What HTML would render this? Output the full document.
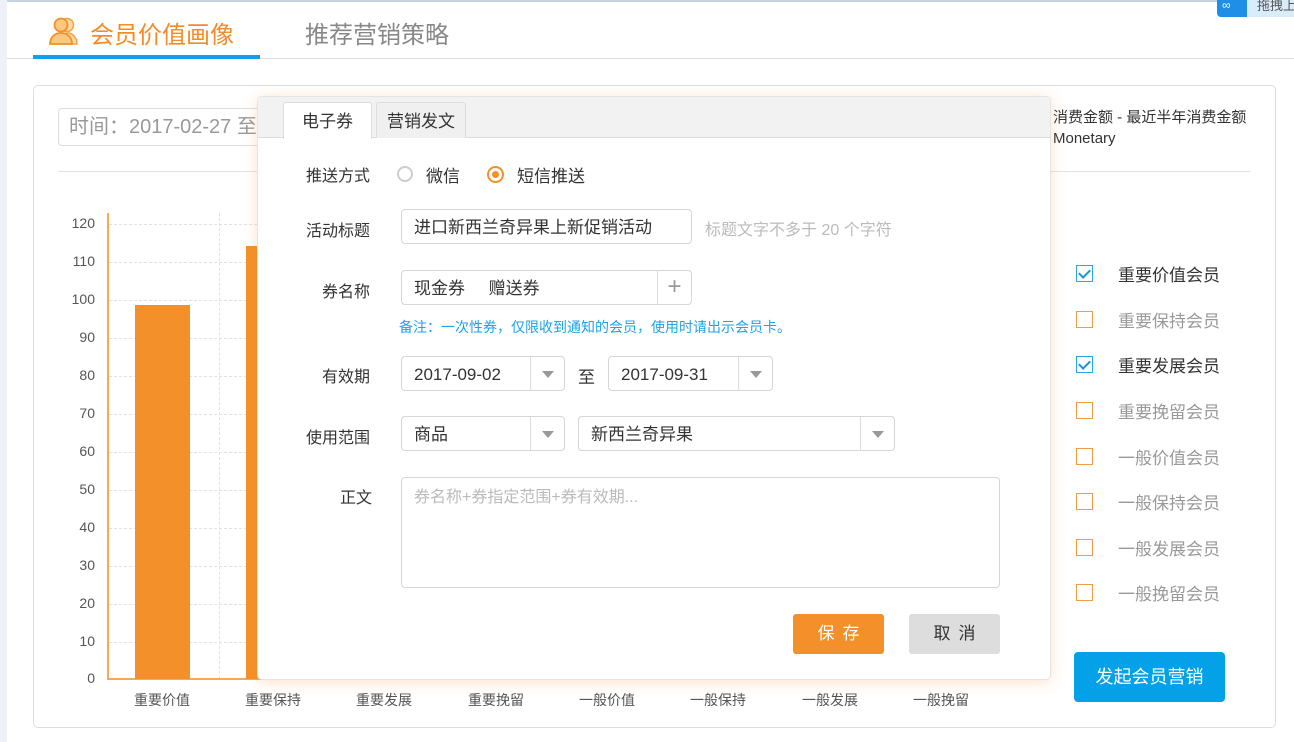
<!DOCTYPE html>
<html><head><meta charset="utf-8"><style>
*{margin:0;padding:0;box-sizing:border-box}
body{width:1294px;height:742px;background:#fff;font-family:"Liberation Sans","Noto Sans CJK SC",sans-serif;position:relative;overflow:hidden;color:#333}
.a{position:absolute}
.lbl{font-size:16px;color:#333}
.inp{position:absolute;border:1px solid #d6d6d6;border-radius:4px;background:#fff;font-size:17px;color:#333;height:35px;line-height:35px;padding-left:12px}
.dd{position:absolute;right:0;top:0;width:34px;height:33px;border-left:1px solid #ddd}
.dd:after{content:"";position:absolute;left:11px;top:14px;border-left:6px solid transparent;border-right:6px solid transparent;border-top:7px solid #999}
.yl{position:absolute;left:50px;width:45px;text-align:right;font-size:14px;color:#555}
.hg{position:absolute;left:109px;width:908px;border-top:1px dashed #e2e2e2}
.vg{position:absolute;top:213px;height:466px;border-left:1px dashed #e2e2e2}
.xl{position:absolute;top:690px;width:100px;text-align:center;font-size:14px;color:#555}
.cb{position:absolute;left:1076px;width:17px;height:17px;border:1px solid #f39b45;background:#fff}
.cb.on{border-color:#29a8e6}
.cb.on:after{content:"";position:absolute;left:4px;top:1px;width:5px;height:9px;border-right:2px solid #1896d8;border-bottom:2px solid #1896d8;transform:rotate(45deg)}
.cl{position:absolute;left:1118px;font-size:17px;color:#999}
.cl.on{color:#333}
</style></head><body>
<div class="a" style="left:0;top:0;width:1294px;height:2px;background:#c9d3e0"></div>
<div class="a" style="left:0;top:0;width:7px;height:742px;background:#eef2f8"></div>
<div class="a" style="left:1217px;top:0;width:77px;height:17px;background:#d9ecfa;border-left:30px solid #1f8ee6;border-radius:0 0 0 4px;font-size:13px;color:#555;padding-left:10px;line-height:12px;white-space:nowrap;overflow:hidden">拖拽上</div>
<div class="a" style="left:1222px;top:0;width:20px;height:12px;color:#fff;font-size:12px;line-height:10px">∞</div>
<svg class="a" style="left:48px;top:16px" width="34" height="30" viewBox="0 0 34 30"><circle cx="19" cy="9" r="6.5" fill="#fcd9a4" stroke="#f6a13c" stroke-width="1.5"/><path d="M12 28c0-7 4-11 8-11s9 4 9 11z" fill="#fcd9a4" stroke="#f6a13c" stroke-width="1.5"/><circle cx="13" cy="9" r="6.5" fill="#fcc77e" stroke="#f39029" stroke-width="1.8"/><path d="M2 28c0-7 5-11 11-11s11 4 11 11z" fill="#fcc77e" stroke="#f39029" stroke-width="1.8"/></svg>
<div class="a" style="left:90px;top:15px;font-size:24px;color:#f28c28">会员价值画像</div>
<div class="a" style="left:305px;top:15px;font-size:24px;color:#888">推荐营销策略</div>
<div class="a" style="left:7px;top:58px;width:1287px;height:1px;background:#ddd"></div>
<div class="a" style="left:33px;top:55px;width:227px;height:4px;background:#10a0e8"></div>
<div class="a" style="left:33px;top:85px;width:1243px;height:643px;border:1px solid #ddd;border-radius:5px"></div>
<div class="a" style="left:58px;top:108px;width:210px;height:38px;border:1px solid #ddd;border-radius:4px;font-size:20px;color:#999;line-height:36px;padding-left:10px;white-space:nowrap;overflow:hidden">时间：2017-02-27 至</div>
<div class="a" style="left:58px;top:171px;width:1193px;height:1px;background:#e3e3e3"></div>
<div class="a" style="left:1053px;top:107px;font-size:15px;color:#333;line-height:21px">消费金额 - 最近半年消费金额<br>Monetary</div>
<div class="yl" style="top:215px">120</div><div class="yl" style="top:253px">110</div><div class="yl" style="top:291px">100</div><div class="yl" style="top:329px">90</div><div class="yl" style="top:367px">80</div><div class="yl" style="top:405px">70</div><div class="yl" style="top:443px">60</div><div class="yl" style="top:481px">50</div><div class="yl" style="top:519px">40</div><div class="yl" style="top:557px">30</div><div class="yl" style="top:595px">20</div><div class="yl" style="top:633px">10</div><div class="yl" style="top:670px">0</div>
<div class="hg" style="top:224px"></div><div class="hg" style="top:262px"></div><div class="hg" style="top:300px"></div><div class="hg" style="top:338px"></div><div class="hg" style="top:376px"></div><div class="hg" style="top:414px"></div><div class="hg" style="top:452px"></div><div class="hg" style="top:490px"></div><div class="hg" style="top:528px"></div><div class="hg" style="top:566px"></div><div class="hg" style="top:604px"></div><div class="hg" style="top:642px"></div>
<div class="vg" style="left:219px"></div>
<div class="a" style="left:107px;top:213px;width:2px;height:467px;background:#f7a955"></div>
<div class="a" style="left:107px;top:678px;width:910px;height:2px;background:#f7a955"></div>
<div class="a" style="left:135px;top:305px;width:55px;height:374px;background:#f39029"></div>
<div class="a" style="left:246px;top:246px;width:20px;height:433px;background:#f39029"></div>
<div class="xl" style="left:112px">重要价值</div><div class="xl" style="left:223px">重要保持</div><div class="xl" style="left:334px">重要发展</div><div class="xl" style="left:446px">重要挽留</div><div class="xl" style="left:557px">一般价值</div><div class="xl" style="left:668px">一般保持</div><div class="xl" style="left:780px">一般发展</div><div class="xl" style="left:891px">一般挽留</div>
<div class="cb on" style="top:265px"></div><div class="cl on" style="top:261px">重要价值会员</div>
<div class="cb" style="top:311px"></div><div class="cl" style="top:307px">重要保持会员</div>
<div class="cb on" style="top:356px"></div><div class="cl on" style="top:352px">重要发展会员</div>
<div class="cb" style="top:402px"></div><div class="cl" style="top:398px">重要挽留会员</div>
<div class="cb" style="top:448px"></div><div class="cl" style="top:444px">一般价值会员</div>
<div class="cb" style="top:493px"></div><div class="cl" style="top:489px">一般保持会员</div>
<div class="cb" style="top:539px"></div><div class="cl" style="top:535px">一般发展会员</div>
<div class="cb" style="top:584px"></div><div class="cl" style="top:580px">一般挽留会员</div>
<div class="a" style="left:1074px;top:652px;width:151px;height:50px;background:#04a0e8;border-radius:4px;color:#fff;font-size:18px;text-align:center;line-height:50px">发起会员营销</div>
<div class="a" style="left:257px;top:96px;width:794px;height:584px;background:#fff;border:1px solid #e4e4e4;border-radius:5px;box-shadow:0 2px 14px rgba(245,150,60,.28)"></div>
<div class="a" style="left:258px;top:97px;width:792px;height:41px;background:#f2f2f2;border-bottom:1px solid #ddd;border-radius:5px 5px 0 0"></div>
<div class="a" style="left:283px;top:102px;width:89px;height:37px;background:#fff;border:1px solid #ddd;border-bottom:none;border-radius:3px 3px 0 0;font-size:17px;text-align:center;line-height:38px">电子券</div>
<div class="a" style="left:376px;top:102px;width:90px;height:36px;background:#f0f0f0;border:1px solid #ddd;border-bottom:none;border-radius:3px 3px 0 0;font-size:17px;text-align:center;line-height:38px">营销发文</div>
<div class="a lbl" style="left:306px;top:162px">推送方式</div>
<div class="a" style="left:397px;top:166px;width:16px;height:16px;border:2px solid #ccc;border-radius:50%"></div>
<div class="a lbl" style="left:426px;top:162px;font-size:17px">微信</div>
<div class="a" style="left:487px;top:166px;width:17px;height:17px;border:2px solid #f39029;border-radius:50%"></div>
<div class="a" style="left:492px;top:171px;width:7px;height:7px;background:#f39029;border-radius:50%"></div>
<div class="a lbl" style="left:517px;top:162px;font-size:17px">短信推送</div>
<div class="a lbl" style="left:306px;top:217px">活动标题</div>
<div class="inp" style="left:401px;top:209px;width:291px">进口新西兰奇异果上新促销活动</div>
<div class="a" style="left:705px;top:216px;font-size:16px;color:#bbb">标题文字不多于 20 个字符</div>
<div class="a lbl" style="left:322px;top:278px">券名称</div>
<div class="inp" style="left:401px;top:270px;width:291px">现金券&nbsp;&nbsp;&nbsp;&nbsp;&nbsp;赠送券<div class="a" style="right:0;top:0;width:34px;height:33px;border-left:1px solid #ddd;text-align:center;color:#999;font-size:24px;line-height:31px">+</div></div>
<div class="a" style="left:399px;top:317px;font-size:14px;color:#1ea3e8">备注：一次性券，仅限收到通知的会员，使用时请出示会员卡。</div>
<div class="a lbl" style="left:322px;top:363px">有效期</div>
<div class="inp" style="left:401px;top:356px;width:164px">2017-09-02<div class="dd"></div></div>
<div class="a lbl" style="left:578px;top:363px;font-size:17px">至</div>
<div class="inp" style="left:608px;top:356px;width:165px">2017-09-31<div class="dd"></div></div>
<div class="a lbl" style="left:306px;top:424px">使用范围</div>
<div class="inp" style="left:401px;top:416px;width:164px">商品<div class="dd"></div></div>
<div class="inp" style="left:578px;top:416px;width:317px">新西兰奇异果<div class="dd"></div></div>
<div class="a lbl" style="left:340px;top:484px">正文</div>
<div class="a" style="left:401px;top:477px;width:599px;height:111px;border:1px solid #d6d6d6;border-radius:4px;font-size:16px;color:#bbb;padding:5px 12px">券名称+券指定范围+券有效期...</div>
<div class="a" style="left:793px;top:614px;width:91px;height:40px;background:#f39029;border-radius:3px;color:#fff;font-size:17px;text-align:center;line-height:40px;letter-spacing:8px;padding-left:8px">保存</div>
<div class="a" style="left:909px;top:614px;width:91px;height:40px;background:#ddd;border-radius:3px;color:#333;font-size:17px;text-align:center;line-height:40px;letter-spacing:8px;padding-left:8px">取消</div>
</body></html>
